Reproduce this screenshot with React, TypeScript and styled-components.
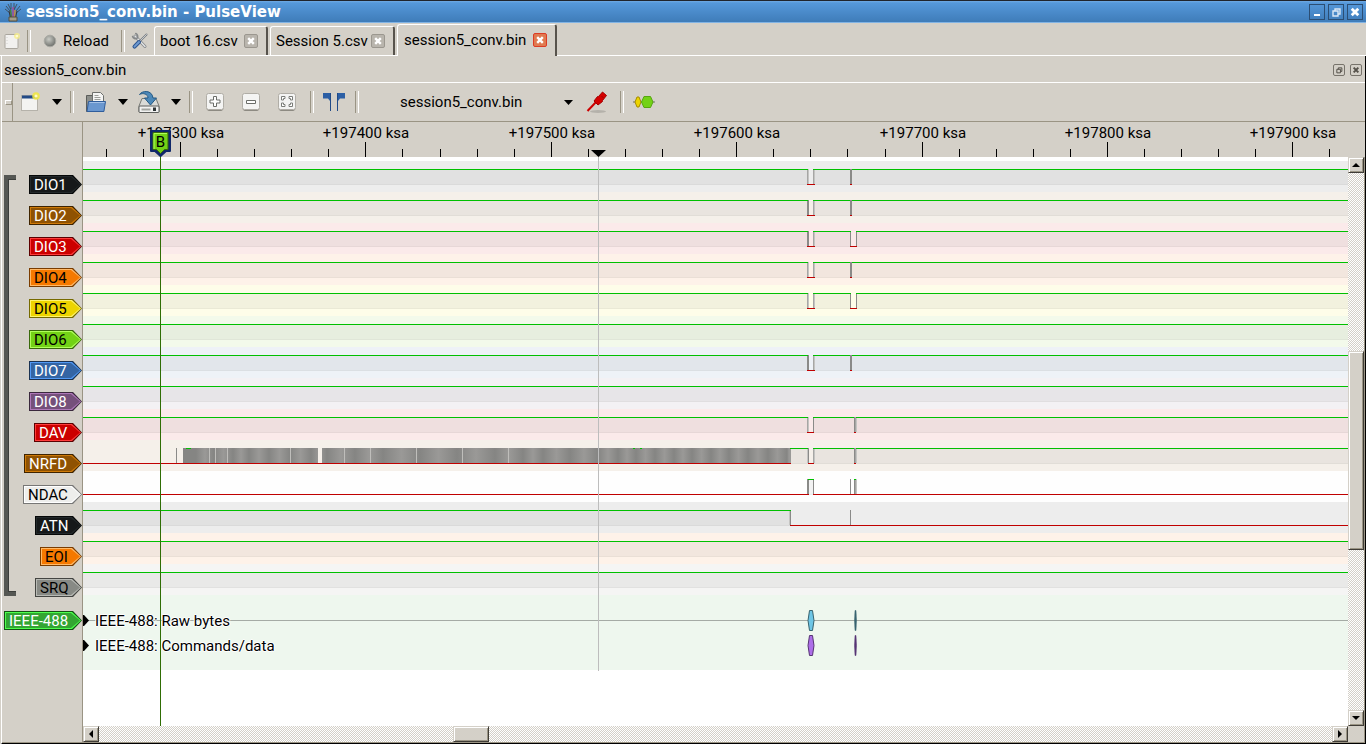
import React from "react";
import styled, { createGlobalStyle } from "styled-components";

const FACE = "#d4d0c8";
const SHADE = "#9a9484";
const UI_FONT = 'Roboto, "Noto Sans", sans-serif';

const GlobalStyle = createGlobalStyle`
  * { box-sizing: border-box; }
  body { margin: 0; background: ${FACE}; font: 15px/20px ${UI_FONT}; color: #000; }
  button, select { font: inherit; color: inherit; }
  svg { display: block; }
`;

/* ---------- window frame ---------- */

const Window = styled.div`
  display: flex;
  flex-direction: column;
  min-height: 100vh;
  background: ${FACE};
`;

const TitleBar = styled.header`
  display: flex;
  align-items: center;
  gap: 5px;
  height: 23px;
  padding: 1px 3px 0 5px;
  border-top: 1px solid #20242c;
  border-bottom: 1px solid #82b4e4;
  background: linear-gradient(#70aae4 0, #5598da 2px, #3f7cb9 100%);
`;

const WindowTitle = styled.h1`
  flex: 1;
  margin: 0;
  font: bold 15px/20px "DejaVu Sans", sans-serif;
  color: #fff;
`;

const FrameButtons = styled.div`
  display: flex;
  gap: 3px;
`;

const FrameButton = styled.button`
  width: 16px;
  height: 16px;
  padding: 0;
  border: 1px solid #2b4e74;
  background: transparent;
`;

/* ---------- session tabs ---------- */

const TabBar = styled.nav`
  display: flex;
  align-items: flex-end;
  height: 33px;
  border-bottom: 1px solid #fff;
`;

const TabTools = styled.div`
  display: flex;
  align-items: center;
  height: 28px;
  width: 154px;
`;

const FlatButton = styled.button<{ $w: number }>`
  display: flex;
  align-items: center;
  justify-content: center;
  gap: 6px;
  flex: none;
  width: ${(p) => p.$w}px;
  height: 28px;
  padding: 0;
  border: 0;
  background: transparent;
`;

const Separator = styled.i<{ $w: number }>`
  display: flex;
  justify-content: center;
  flex: none;
  width: ${(p) => p.$w}px;
  &::after {
    content: "";
    width: 2px;
    height: 22px;
    border-left: 1px solid ${SHADE};
    border-right: 1px solid #fff;
  }
`;

const Tab = styled.div<{ $active?: boolean; $w: number }>`
  display: flex;
  align-items: center;
  justify-content: space-between;
  width: ${(p) => p.$w}px;
  height: ${(p) => (p.$active ? 32 : 29)}px;
  margin: 0 ${(p) => (p.$active ? 0 : 2)}px ${(p) => (p.$active ? -1 : 0)}px 0;
  padding: 0 8px ${(p) => (p.$active ? 2 : 0)}px ${(p) => (p.$active ? 6 : 5)}px;
  border: 1px solid #fff;
  border-bottom: 0;
  border-right: 2px solid #57534c;
  border-radius: 3px 3px 0 0;
  background: ${FACE};
`;

const TabLink = styled.a`
  color: inherit;
  text-decoration: none;
  white-space: nowrap;
`;

const CloseButton = styled.button<{ $hot?: boolean }>`
  width: 14px;
  height: 14px;
  padding: 0;
  border: 1px solid ${(p) => (p.$hot ? "#dd3b24" : "#9b978f")};
  border-radius: 2px;
  background: ${(p) => (p.$hot ? "#e07a50" : "#b9b5ad")};
`;

/* ---------- dock ---------- */

const Dock = styled.main`
  display: flex;
  flex-direction: column;
  flex: 1;
  margin-left: 1px;
  border-left: 1px solid #fff;
  border-right: 1px solid #000;
  border-bottom: 1px solid #000;
`;

const DockTitle = styled.div`
  display: flex;
  align-items: center;
  gap: 5px;
  height: 27px;
  padding: 2px 3px 0 2px;
  border-bottom: 1px solid #fff;
`;

const DockName = styled.h2`
  flex: 1;
  margin: 0;
  font: inherit;
`;

const DockButton = styled.button`
  display: flex;
  align-items: center;
  justify-content: center;
  width: 12px;
  height: 12px;
  padding: 0;
  border: 1px solid #77736b;
  border-radius: 2px;
  background: transparent;
`;

const ToolBar = styled.div`
  display: flex;
  align-items: center;
  height: 39px;
  border-bottom: 1px solid ${SHADE};
`;

const Grip = styled.i`
  display: flex;
  align-items: center;
  align-self: stretch;
  width: 11px;
  margin-right: -1px;
  padding-left: 3px;
  border-right: 1px solid ${SHADE};
  &::after {
    content: "";
    width: 5px;
    height: 3px;
    border: 1px solid #fff;
    border-right-color: ${SHADE};
    border-bottom-color: ${SHADE};
  }
`;

const DeviceField = styled.label`
  position: relative;
  display: flex;
  align-items: center;
  width: 187px;
  margin-left: 29px;
`;

const DeviceSelect = styled.select`
  appearance: none;
  width: 100%;
  height: 28px;
  padding: 0 24px 0 8px;
  border: 0;
  background: transparent;
`;

const SelectArrow = styled.span`
  position: absolute;
  right: 6px;
  pointer-events: none;
`;

/* ---------- trace view ---------- */

const View = styled.section`
  display: grid;
  grid-template-columns: 81px minmax(0, 1fr) 17px;
  grid-template-rows: 1fr 17px;
  flex: 1;
`;

const Names = styled.div`
  grid-row: 1 / 3;
  padding-top: 53px;
  border-right: 1px solid ${SHADE};
  border-bottom: 1px solid ${SHADE};
`;

const NameGroup = styled.div`
  display: flex;
  justify-content: space-between;
  padding-left: 2px;
  margin-bottom: 14px;
`;

const Bracket = styled.i`
  width: 12px;
  margin-bottom: 1px;
  border: 4px solid #555753;
  border-right: 0;
  box-shadow: inset 1px 1px 0 #3c3e3b, inset 0 -1px 0 #3c3e3b;
`;

const NameList = styled.div`
  display: flex;
  flex-direction: column;
  align-items: flex-end;
  gap: 12px;
`;

const TIP = "polygon(0 0, calc(100% - 9px) 0, 100% 50%, calc(100% - 9px) 100%, 0 100%)";

const TagEdge = styled.button<{ $w: number; $edge: string }>`
  display: block;
  width: ${(p) => p.$w}px;
  height: 19px;
  margin-left: auto;
  padding: 1px;
  border: 0;
  background: ${(p) => p.$edge};
  clip-path: ${TIP};
`;

const TagBevel = styled.span<{ $bevel: string }>`
  display: block;
  padding: 1px;
  background: ${(p) => p.$bevel};
  clip-path: ${TIP};
`;

const TagFace = styled.span<{ $fill: string; $ink: string }>`
  display: block;
  height: 15px;
  padding-left: 3px;
  line-height: 16px;
  text-align: left;
  color: ${(p) => p.$ink};
  background: ${(p) => p.$fill};
  clip-path: ${TIP};
`;

const Plot = styled.div`
  position: relative;
  display: flex;
  flex-direction: column;
  overflow: hidden;
  background: #fff;
`;

const Ruler = styled.div`
  height: 35px;
  background: ${FACE};
`;

const Signals = styled.div`
  padding-top: 4px;
`;

const SignalRow = styled.div<{ $bg: string }>`
  height: 31px;
  background: ${(p) => p.$bg};
`;

const DecoderArea = styled.div`
  padding: 13px 0 12px;
  background: #eef7ee;
`;

const DecoderRow = styled.div`
  position: relative;
  display: flex;
  align-items: center;
  height: 25px;
  padding-left: 12px;
`;

const DecoderChart = styled.svg`
  position: absolute;
  left: 0;
  top: 0;
`;

const DecoderText = styled.span`
  position: relative;
  text-shadow: 1px 0 #fff, -1px 0 #fff, 0 1px #fff, 0 -1px #fff;
`;

const HoverLine = styled.i`
  position: absolute;
  left: 515px;
  top: 35px;
  width: 1px;
  height: 514px;
  background: #bdbdbd;
`;

const FlagLine = styled.i`
  position: absolute;
  left: 77px;
  top: 35px;
  bottom: 0;
  width: 1px;
  background: #2f6d05;
`;

const Flag = styled.svg`
  position: absolute;
  left: 66px;
  top: 7px;
`;

const RulerText = styled.text`
  font: 15px ${UI_FONT};
  text-anchor: middle;
`;

/* ---------- scroll bars ---------- */

const CHECKER = `repeating-conic-gradient(#fff 0 25%, ${FACE} 0 50%) 0 0 / 2px 2px`;

const ScrollBar = styled.div<{ $vertical?: boolean }>`
  display: flex;
  flex-direction: ${(p) => (p.$vertical ? "column" : "row")};
  margin-top: ${(p) => (p.$vertical ? 35 : 0)}px;
  border-right: ${(p) => (p.$vertical ? `1px solid ${SHADE}` : "0")};
  border-bottom: ${(p) => (p.$vertical ? "0" : `1px solid ${SHADE}`)};
  background: ${CHECKER};
`;

const raised = `
  border: 1px solid;
  border-color: ${FACE} #3f3c36 #3f3c36 ${FACE};
  background: ${FACE};
  box-shadow: inset 1px 1px 0 #fff, inset -1px -1px 0 ${SHADE};
`;

const ScrollButton = styled.button`
  display: flex;
  align-items: center;
  justify-content: center;
  flex: none;
  width: 16px;
  height: 16px;
  padding: 0;
  ${raised}
`;

const ScrollGap = styled.i<{ $share: number }>`
  flex: ${(p) => p.$share} 1 0;
`;

const Thumb = styled.div<{ $share: number }>`
  flex: ${(p) => p.$share} 1 0;
  ${raised}
`;

const Corner = styled.div`
  border-right: 1px solid ${SHADE};
  border-bottom: 1px solid ${SHADE};
`;

/* ---------- icons ---------- */

const AppIcon = () => (
  <svg width="16" height="19" viewBox="0 0 16 19" fill="none">
    <path d="M1 3l4 5M3 1l3 6M6 0v6M9 0v6M12 1l-3 6M15 3l-4 5M0 6l5 4M16 6l-5 4" stroke="#3c4148" strokeWidth=".8" />
    <path d="M5.500 7l1 8" stroke="#4b7d3a" strokeWidth="1.500" />
    <path d="M8 4v11" stroke="#a34b9a" strokeWidth="1.500" />
    <path d="M10 7l-.5 8" stroke="#c08a3e" strokeWidth="1.500" />
    <path d="M4 8l1.500 7M12 8l-1.500 7" stroke="#33363b" />
    <path d="M4 14h8v4H4z" fill="#a39d8a" stroke="#55503f" />
  </svg>
);

const Cross = ({ color, size = 12 }: { color: string; size?: number }) => (
  <svg width={size} height={size} viewBox="0 0 12 12">
    <path d="M3.200 3.200l5.600 5.600M8.800 3.200l-5.600 5.600" stroke={color} strokeWidth="2.400" />
  </svg>
);

const Restore = ({ color, size }: { color: string; size: number }) => (
  <svg width={size} height={size} viewBox="0 0 14 14" fill="none" stroke={color} strokeWidth="1.400">
    <path d="M6 6V4h5v5H9M4 6h5v5H4z" />
  </svg>
);

const NewSheet = () => (
  <svg width="18" height="18" viewBox="0 0 18 18">
    <rect x="2" y="2.500" width="13" height="14" rx="1" fill="#f2f1ef" stroke="#aaa69e" />
    <path d="M4 5v9" stroke="#d0cfcc" strokeDasharray="1 2" />
    <circle cx="14" cy="4" r="3" fill="#f7ef8a" opacity=".8" />
    <circle cx="14" cy="4" r="1.300" fill="#fffbd0" />
  </svg>
);

const Ball = () => (
  <svg width="14" height="14" viewBox="0 0 14 14">
    <defs>
      <radialGradient id="ball" cx=".4" cy=".35" r=".7">
        <stop offset="0" stopColor="#c9cbc5" />
        <stop offset=".6" stopColor="#8f918c" />
        <stop offset="1" stopColor="#686a66" />
      </radialGradient>
    </defs>
    <circle cx="7" cy="7" r="5.800" fill="url(#ball)" stroke="#a9a9a3" />
  </svg>
);

const Tools = () => (
  <svg width="18" height="18" viewBox="0 0 18 18" fill="none" strokeLinecap="round">
    <path d="M4 4l10 10.500" stroke="#85888a" strokeWidth="3" />
    <path d="M4 4l10 10.500" stroke="#e3e5e6" strokeWidth="1.400" />
    <path d="M1.600 4.600a3 3 0 0 0 4.400 1.600M4.800 1.600a3 3 0 0 1 1.400 4.400" stroke="#85888a" strokeWidth="1.600" />
    <path d="M9 9l6.500-6.500" stroke="#777b80" strokeWidth="2" />
    <path d="M9 9l6.500-6.500" stroke="#dcdfe2" strokeWidth=".8" />
    <path d="M3.500 14.600L8 10" stroke="#2d5590" strokeWidth="4" />
    <path d="M3.500 14.600L8 10" stroke="#6f9ad0" strokeWidth="2" />
  </svg>
);

const NewWindow = () => (
  <svg width="20" height="20" viewBox="0 0 20 20">
    <rect x="1.500" y="3.500" width="16" height="15" fill="#f3f3f1" stroke="#b5b2aa" />
    <path d="M2 5h15" stroke="#234a86" strokeWidth="3" />
    <circle cx="16" cy="4" r="3.800" fill="#f3e93c" opacity=".85" />
    <circle cx="16" cy="4" r="1.600" fill="#fffcc8" />
  </svg>
);

const OpenFolder = () => (
  <svg width="22" height="22" viewBox="0 0 22 22">
    <path d="M1.500 4.500h7l1 2h9v14h-17z" fill="#8d8f8b" stroke="#5b5d5a" />
    <path d="M7.500 1.500h8l3 3v9h-11z" fill="#f5f5f4" stroke="#6d6f6c" />
    <path d="M9.500 4.500h4M9.500 6.500h6M9.500 8.500h6" stroke="#9b9d99" />
    <path d="M3.500 10.500h17l-1.600 10H2z" fill="#6a97cf" stroke="#2f5d9c" />
    <path d="M4.500 11.500h15" stroke="#a4c1e6" />
  </svg>
);

const SaveDisk = () => (
  <svg width="24" height="24" viewBox="0 0 24 24">
    <path d="M5 8.500h14l3 7.500v6H2v-6z" fill="#d9dad7" stroke="#777975" />
    <rect x="2" y="16" width="20" height="6.500" rx="1" fill="#f1f1f0" stroke="#5d5f5c" />
    <path d="M4.500 19.500h9" stroke="#a2a4a0" strokeWidth="2" />
    <path d="M16 17.500h3v3.500h-3z" fill="#2e3436" />
    <path d="M2.500 4.500C5 .5 15 -.5 16 8h3.500l-6 7-6-7H11C11 4 6 2.500 2.500 4.500z" fill="#4c88b8" stroke="#235985" />
  </svg>
);

const ZoomKey = ({ children }: { children: React.ReactNode }) => (
  <svg width="18" height="20" viewBox="0 0 18 20" fill="none">
    <path d="M1 16.500q0 2 2 2h12q2 0 2-2" stroke="#8d8a82" />
    <rect x=".5" y="1.500" width="17" height="16" rx="2" fill="#f4f4f3" stroke="#b0ada6" />
    {children}
  </svg>
);

const CursorPair = () => (
  <svg width="24" height="20" viewBox="0 0 24 20">
    <path d="M1 1h8v18H8V9L6 6.500H1z" fill="#2c5fa5" />
    <path d="M23 1h-8v18h1V9l2-2.500h5z" fill="#2c5fa5" />
    <path d="M8.500 1v18M15.500 1v18" stroke="#204a87" />
  </svg>
);

const Probe = () => (
  <svg width="22" height="24" viewBox="0 0 22 24">
    <ellipse cx="12" cy="21.500" rx="8" ry="1.500" fill="#000" opacity=".15" />
    <path d="M1.500 21l9-9.500" stroke="#c00" strokeWidth="2" />
    <path d="M8 11l3.500-4.500 1 0 4-4.500 4 3.500-4 5v1L12 15z" fill="#d40000" stroke="#a40000" />
    <path d="M15.500 6l2 2" stroke="#a40000" />
  </svg>
);

const DecoderIcon = () => (
  <svg width="24" height="14" viewBox="0 0 24 14">
    <path d="M1 7h22" stroke="#6d6f6a" />
    <path d="M3 7l2-5h2l2 5-2 5H5z" fill="#edd400" stroke="#a68d00" />
    <path d="M9.500 7l2.500-5.500h6.500L21 7l-2.500 5.500H12z" fill="#73d216" stroke="#56a60f" />
  </svg>
);

const Arrow = ({ points, w, h }: { points: string; w: number; h: number }) => (
  <svg width={w} height={h}>
    <polygon points={points} />
  </svg>
);

const DropArrow = () => <Arrow w={10} h={6} points="0,0 10,0 5,6" />;

/* ---------- data ---------- */

type Edge = [x: number, color: string];

interface Wave {
  high?: [number, number?][];
  low?: [number, number?][];
  edges?: Edge[];
  extra?: React.ReactNode;
}

const DARK = "#8a8a88";
const MID = "#a6a6a4";
const PALE = "#c4c4c2";

const pulse = (left: [string, string], right: [string, string]): Edge[] => [
  [724, left[0]],
  [725, left[1]],
  [730, right[0]],
  [731, right[1]],
];

const narrow = (left: [string, string]): Wave => ({
  high: [[0, 725], [730, 767], [769]],
  low: [[724, 732], [767, 769]],
  edges: [...pulse(left, [MID, PALE]), [767, DARK], [768, DARK]],
});

const wide = (left: [string, string]): Wave => ({
  high: [[0, 725], [730, 768], [773]],
  low: [[724, 732], [767, 774]],
  edges: [...pulse(left, [MID, PALE]), [767, DARK], [773, DARK]],
});

const idleHigh: Wave = { high: [[0]] };

/* Centres of the darker bands in the dense burst. */
const bands = [
  113, 131, 150, 166, 186, 207, 228, 244, 272, 300, 337, 374, 412, 440, 460, 487, 515, 535, 553,
  572, 591, 609, 628, 646, 665, 685, 704,
];
const BURST_START = 100;
const BURST_END = 708;

const Burst = () => {
  const at = (x: number) => (x - BURST_START) / (BURST_END - BURST_START);
  return (
    <>
      <defs>
        <linearGradient id="burst">
          {bands.flatMap((x, i) => [
            <stop key={x} offset={at(x)} stopColor="#858583" />,
            <stop
              key={`${x}m`}
              offset={at((x + (bands[i + 1] ?? BURST_END)) / 2)}
              stopColor="#9a9997"
            />,
          ])}
        </linearGradient>
      </defs>
      <rect x={BURST_START} y={8} width={BURST_END - BURST_START} height={15} fill="url(#burst)" />
      <rect x={235} y={8} width={4} height={15} fill="#f5f0ea" />
      {[126, 132, 144, 207, 261, 287, 333, 379, 425].map((x) => (
        <rect key={x} x={x} y={8} width={1} height={15} fill="#bfbebb" />
      ))}
      <path d="M103 8.500h5M550 8.500h2M557 8.500h2" stroke="#00c000" />
    </>
  );
};

interface Channel {
  name: string;
  w: number;
  fill: string;
  edge: string;
  bevel: string;
  ink: string;
  bg: string;
  wave: Wave;
}

const BLACK = { fill: "#16191a", edge: "#060808", bevel: "#23292b", ink: "#fff", bg: "#ededed" };
const BROWN = { fill: "#8f5202", edge: "#3f2400", bevel: "#cf7a08", ink: "#fff", bg: "#f5f0ea" };
const RED = { fill: "#cc0000", edge: "#5c0000", bevel: "#ff3c3c", ink: "#fff", bg: "#fbeaea" };
const ORANGE = { fill: "#f57900", edge: "#7a3c00", bevel: "#ffb968", ink: "#000", bg: "#fef2e9" };
const YELLOW = { fill: "#edd400", edge: "#766a00", bevel: "#fff46a", ink: "#000", bg: "#fefde9" };
const GREEN = { fill: "#73d216", edge: "#39690b", bevel: "#b0ff5a", ink: "#000", bg: "#f3faeb" };
const BLUE = { fill: "#3465a4", edge: "#1a3252", bevel: "#5199f5", ink: "#fff", bg: "#eef2f7" };
const PURPLE = { fill: "#75507b", edge: "#3a283d", bevel: "#ae77b8", ink: "#fff", bg: "#f3f1f4" };
const WHITE = { fill: "#eeeeec", edge: "#777776", bevel: "#ffffff", ink: "#000", bg: "#fefefe" };
const GREY = { fill: "#888a85", edge: "#444542", bevel: "#b8bab5", ink: "#000", bg: "#f5f5f4" };

const channels: Channel[] = [
  { name: "DIO1", w: 53, ...BLACK, wave: narrow([MID, PALE]) },
  { name: "DIO2", w: 53, ...BROWN, wave: narrow([DARK, DARK]) },
  { name: "DIO3", w: 53, ...RED, wave: wide([DARK, DARK]) },
  { name: "DIO4", w: 53, ...ORANGE, wave: narrow([MID, PALE]) },
  { name: "DIO5", w: 53, ...YELLOW, wave: wide([MID, PALE]) },
  { name: "DIO6", w: 53, ...GREEN, wave: idleHigh },
  { name: "DIO7", w: 53, ...BLUE, wave: narrow([DARK, DARK]) },
  { name: "DIO8", w: 53, ...PURPLE, wave: idleHigh },
  {
    name: "DAV",
    w: 48,
    ...RED,
    wave: {
      high: [[0, 725], [730, 771], [773]],
      low: [[724, 731], [771, 773]],
      edges: [[724, MID], [725, PALE], [730, DARK], [771, DARK], [772, MID], [773, PALE]],
    },
  },
  {
    name: "NRFD",
    w: 58,
    ...BROWN,
    wave: {
      high: [[707, 725], [730, 771], [773]],
      low: [[0, 708], [725, 731], [771, 773]],
      edges: [[93, DARK], [724, PALE], [725, DARK], [730, MID], [731, PALE], [771, DARK], [772, MID], [773, PALE]],
      extra: <Burst />,
    },
  },
  {
    name: "NDAC",
    w: 59,
    ...WHITE,
    wave: {
      high: [[725, 731], [771, 773]],
      low: [[0, 726], [730]],
      edges: [[724, DARK], [725, DARK], [730, DARK], [767, DARK], [771, DARK], [772, MID], [773, PALE]],
    },
  },
  {
    name: "ATN",
    w: 47,
    ...BLACK,
    wave: { high: [[0, 708]], low: [[707]], edges: [[706, PALE], [707, DARK], [767, DARK]] },
  },
  { name: "EOI", w: 42, ...ORANGE, wave: idleHigh },
  { name: "SRQ", w: 47, ...GREY, wave: idleHigh },
];

const span = (from: number, to?: number) => (to === undefined ? "100%" : to - from);

const Trace = ({ wave }: { wave: Wave }) => (
  <svg width="100%" height="31" shapeRendering="crispEdges" aria-hidden="true">
    {wave.high?.map(([from, to]) => (
      <g key={from}>
        <rect x={from} y={9} width={span(from, to)} height={14} fill="#000" opacity={0.048} />
        <rect x={from} y={23} width={span(from, to)} height={1} fill="#000" opacity={0.08} />
      </g>
    ))}
    {wave.edges?.map(([x, color]) => (
      <rect key={x} x={x} y={8} width={1} height={15} fill={color} />
    ))}
    {wave.extra}
    {wave.high?.map(([from, to]) => (
      <rect key={from} x={from} y={8} width={span(from, to)} height={1} fill="#00c000" />
    ))}
    {wave.low?.map(([from, to]) => (
      <rect key={from} x={from} y={23} width={span(from, to)} height={1} fill="#c00000" />
    ))}
  </svg>
);

const Tag = ({ name, w, fill, edge, bevel, ink }: Omit<Channel, "wave" | "bg">) => (
  <TagEdge type="button" $w={w} $edge={edge}>
    <TagBevel $bevel={bevel}>
      <TagFace $fill={fill} $ink={ink}>
        {name}
      </TagFace>
    </TagBevel>
  </TagEdge>
);

const decoders = [
  { label: "IEEE-488: Raw bytes", fill: "#6ec6e6", edge: "#37636f", line: true },
  { label: "IEEE-488: Commands/data", fill: "#ad6ee8", edge: "#563474", line: false },
];

/* A division every 37 px or so, with every fifth one labelled. */
const ticks = Array.from({ length: 34 }, (_, i) => ({
  x: Math.round(98 + (i - 2) * 37.08),
  label: (i - 2) % 5 === 0 ? `+${197300 + ((i - 2) / 5) * 100} ksa` : null,
}));

export default function App() {
  return (
    <Window>
      <GlobalStyle />
      <TitleBar>
        <AppIcon />
        <WindowTitle>session5_conv.bin - PulseView</WindowTitle>
        <FrameButtons>
          <FrameButton aria-label="Minimize">
            <svg width="14" height="14"><path d="M4 9h6v2H4z" fill="#fff" /></svg>
          </FrameButton>
          <FrameButton aria-label="Restore">
            <Restore color="#dbe8f6" size={14} />
          </FrameButton>
          <FrameButton aria-label="Close">
            <Cross color="#fff" size={14} />
          </FrameButton>
        </FrameButtons>
      </TitleBar>

      <TabBar>
        <TabTools>
          <FlatButton $w={24} aria-label="New session"><NewSheet /></FlatButton>
          <Separator $w={10} />
          <FlatButton $w={84}><Ball />Reload</FlatButton>
          <Separator $w={10} />
          <FlatButton $w={24} aria-label="Settings"><Tools /></FlatButton>
        </TabTools>
        <Tab $w={114}>
          <TabLink href="#boot">boot 16.csv</TabLink>
          <CloseButton aria-label="Close boot 16.csv"><Cross color="#fff" /></CloseButton>
        </Tab>
        <Tab $w={125}>
          <TabLink href="#session">Session 5.csv</TabLink>
          <CloseButton aria-label="Close Session 5.csv"><Cross color="#fff" /></CloseButton>
        </Tab>
        <Tab $w={160} $active>
          <TabLink href="#conv">session5_conv.bin</TabLink>
          <CloseButton $hot aria-label="Close session5_conv.bin"><Cross color="#fff" /></CloseButton>
        </Tab>
      </TabBar>

      <Dock>
        <DockTitle>
          <DockName>session5_conv.bin</DockName>
          <DockButton aria-label="Float"><Restore color="#55514a" size={12} /></DockButton>
          <DockButton aria-label="Close"><Cross color="#55514a" size={12} /></DockButton>
        </DockTitle>

        <ToolBar>
          <Grip />
          <FlatButton $w={36} aria-label="New view"><NewWindow /></FlatButton>
          <FlatButton $w={17} aria-label="New view menu"><DropArrow /></FlatButton>
          <Separator $w={13} />
          <FlatButton $w={36} aria-label="Open"><OpenFolder /></FlatButton>
          <FlatButton $w={17} aria-label="Open menu"><DropArrow /></FlatButton>
          <FlatButton $w={36} aria-label="Save"><SaveDisk /></FlatButton>
          <FlatButton $w={17} aria-label="Save menu"><DropArrow /></FlatButton>
          <Separator $w={13} />
          <FlatButton $w={36} aria-label="Zoom in">
            <ZoomKey>
              <path d="M7.500 4.500h3v3.500h3.500v3h-3.500v3.500h-3v-3.500H4v-3h3.500z" fill="#fff" stroke="#6b6d69" />
            </ZoomKey>
          </FlatButton>
          <FlatButton $w={36} aria-label="Zoom out">
            <ZoomKey>
              <path d="M4.500 8.500h9v3h-9z" fill="#fff" stroke="#6b6d69" />
            </ZoomKey>
          </FlatButton>
          <FlatButton $w={36} aria-label="Zoom to fit">
            <ZoomKey>
              <path d="M3.500 8V4.500H7v2H5.500V8zM14.500 8V4.500H11v2h1.500V8zM3.500 11v3.500H7v-2H5.500V11zM14.500 11v3.500H11v-2h1.500V11z" fill="#fff" stroke="#7b7d79" />
            </ZoomKey>
          </FlatButton>
          <Separator $w={13} />
          <FlatButton $w={32} aria-label="Show cursors"><CursorPair /></FlatButton>
          <Separator $w={13} />
          <DeviceField>
            <DeviceSelect aria-label="Device" defaultValue="session5_conv.bin">
              <option>session5_conv.bin</option>
            </DeviceSelect>
            <SelectArrow><Arrow w={9} h={5} points="0,0 9,0 4.5,5" /></SelectArrow>
          </DeviceField>
          <FlatButton $w={36} aria-label="Channels"><Probe /></FlatButton>
          <Separator $w={13} />
          <FlatButton $w={32} aria-label="Add protocol decoder"><DecoderIcon /></FlatButton>
        </ToolBar>

        <View>
          <Names>
            <NameGroup>
              <Bracket />
              <NameList>
                {channels.map((c) => (
                  <Tag key={c.name} {...c} />
                ))}
              </NameList>
            </NameGroup>
            <Tag name="IEEE-488" w={78} fill="#33a533" edge="#145214" bevel="#4dff4d" ink="#fff" />
          </Names>

          <Plot>
            <Ruler>
              <svg width="100%" height="35">
                {ticks.map(({ x, label }) => (
                  <g key={x}>
                    <rect x={x - 1} y={label ? 20 : 27} width={1} height={label ? 15 : 8} />
                    {label && <RulerText x={x} y={16}>{label}</RulerText>}
                  </g>
                ))}
                <polygon points="508,28 523,28 515.5,35" />
              </svg>
            </Ruler>
            <Signals>
              {channels.map((c) => (
                <SignalRow key={c.name} $bg={c.bg}>
                  <Trace wave={c.wave} />
                </SignalRow>
              ))}
            </Signals>
            <DecoderArea>
              {decoders.map((d) => (
                <DecoderRow key={d.label}>
                  <DecoderChart width="100%" height="25">
                    {d.line && <rect y={12} width="100%" height={1} fill="#a5aba5" />}
                    <polygon points="0,7 1,7 6,12.500 1,18 0,18" />
                    <path d="M725 12.500l1.500-10h3l1.500 10-1.500 10h-3z" fill={d.fill} stroke={d.edge} />
                    <path d="M771.500 12.500l.5-10h1l.5 10-.5 10h-1z" fill={d.edge} stroke={d.edge} strokeOpacity={0.5} />
                  </DecoderChart>
                  <DecoderText>{d.label}</DecoderText>
                </DecoderRow>
              ))}
            </DecoderArea>
            <HoverLine />
            <FlagLine />
            <Flag width="23" height="29" viewBox="0 0 23 29">
              <path d="M2 2h19v20h-4l-5.500 5L6 22H2z" fill="#10286a" stroke="#10286a" strokeWidth="2" strokeLinejoin="round" />
              <path d="M4 3.500h15v17h-3.500l-4 4-4-4H4z" fill="#73d216" stroke="#39690b" />
              <path d="M5 20V4.500h13" fill="none" stroke="#b0ff5a" />
              <RulerText x="11.5" y="18">B</RulerText>
            </Flag>
          </Plot>

          <ScrollBar $vertical>
            <ScrollButton aria-label="Scroll up"><Arrow w={8} h={4} points="0,4 8,4 4,0" /></ScrollButton>
            <ScrollGap $share={179} />
            <Thumb $share={197} />
            <ScrollGap $share={161} />
            <ScrollButton aria-label="Scroll down"><Arrow w={8} h={4} points="0,0 8,0 4,4" /></ScrollButton>
          </ScrollBar>

          <ScrollBar>
            <ScrollButton aria-label="Scroll left"><Arrow w={4} h={8} points="4,0 4,8 0,4" /></ScrollButton>
            <ScrollGap $share={355} />
            <Thumb $share={34} />
            <ScrollGap $share={844} />
            <ScrollButton aria-label="Scroll right"><Arrow w={4} h={8} points="0,0 0,8 4,4" /></ScrollButton>
          </ScrollBar>
          <Corner />
        </View>
      </Dock>
    </Window>
  );
}
